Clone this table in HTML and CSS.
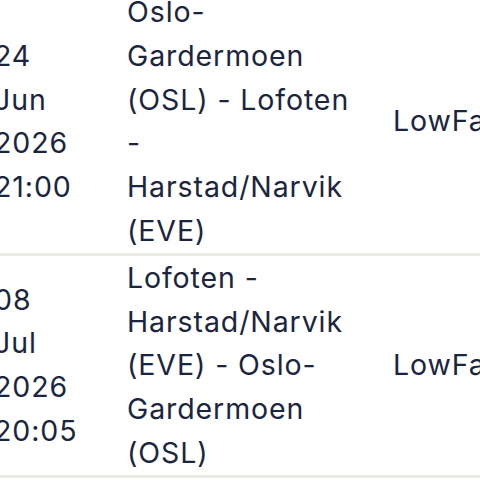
FILE: index.html
```html
<!DOCTYPE html>
<html>
<head>
<meta charset="utf-8">
<link rel="stylesheet" href="styles.css">
</head>
<body>
<div class="table">
  <div class="row">
    <div class="cell date">24<br>Jun<br>2026<br>21:00</div>
    <div class="cell route">Oslo-<br>Gardermoen<br>(OSL) - Lofoten<br>-<br>Harstad/Narvik<br>(EVE)</div>
    <div class="cell fare">LowFare</div>
  </div>
  <div class="row">
    <div class="cell date">08<br>Jul<br>2026<br>20:05</div>
    <div class="cell route">Lofoten -<br>Harstad/Narvik<br>(EVE) - Oslo-<br>Gardermoen<br>(OSL)</div>
    <div class="cell fare">LowFare</div>
  </div>
</div>
</body>
</html>
```
FILE: styles.css
```css
html, body {
  margin: 0;
  padding: 0;
  background: #ffffff;
  overflow: hidden;
}
.table {
  margin-top: -10px;
  margin-left: -6px;
  width: 600px;
  font-family: Inter, "Noto Sans", sans-serif;
  font-size: 28.5px;
  letter-spacing: 0.9px;
  line-height: 43.8px;
  color: #1b2540;
}
.row {
  display: grid;
  grid-template-columns: 133px 266px 200px;
  align-items: center;
  border-bottom: 3px solid #ebebe6;
}
.cell {
  white-space: nowrap;
}
```
